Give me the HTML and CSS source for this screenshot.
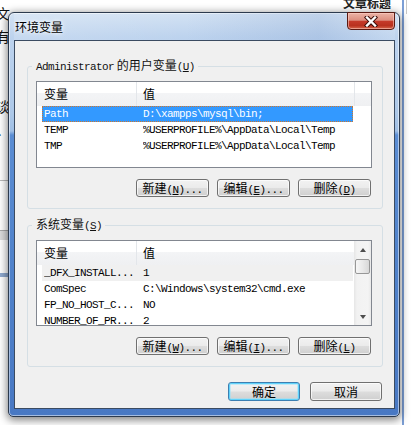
FILE: index.html
```html
<html>
	<head>
		<title>环境变量</title>
		<meta charset="utf-8">
		<link rel="stylesheet" href="styles.css">
	</head>
	<body>
		<div class="desk">
			<!-- bits of the page behind the dialog -->
			<div class="behind">
				<span class="bgchar" style="top:5px">文</span>
				<span class="bgchar" style="top:28px">有</span>
				<span class="bgchar" style="top:98px">谈</span>
				<span class="bgchar" style="top:121px">、</span>
				<div class="bgline grey" style="top:180px"></div>
				<div class="bgline band" style="top:230px"></div>
				<div class="bgline blue" style="top:273px"></div>
				<span class="bgtitle">文章标题</span>
				<div class="vline blue"></div>
				<div class="vline grey"></div>
			</div>

			<div class="window">
				<div class="titlebar">
					<span class="caption">环境变量</span>
					<div class="close-btn">
						<svg width="14" height="11" viewBox="0 0 14 11">
							<path d="M3 1.5 L11 9.5 M11 1.5 L3 9.5" stroke="#3a0e09" stroke-width="4.4" stroke-linecap="square" fill="none"/>
							<path d="M3 1.5 L11 9.5 M11 1.5 L3 9.5" stroke="#ffffff" stroke-width="2.4" stroke-linecap="square" fill="none"/>
						</svg>
					</div>
				</div>
				<div class="client">
					<fieldset class="group">
						<legend><span class="mono">Administrator</span> 的用户变量<span class="mono">(<u>U</u>)</span></legend>
						<div class="list">
							<div class="list-main">
								<div class="list-head">
									<div class="hcol c1">变量</div>
									<div class="hcol c2">值</div>
									<div class="hcol c3"></div>
								</div>
								<div class="row selected"><span class="c1">Path</span><span class="c2">D:\xampps\mysql\bin;</span></div>
								<div class="row"><span class="c1">TEMP</span><span class="c2">%USERPROFILE%\AppData\Local\Temp</span></div>
								<div class="row"><span class="c1">TMP</span><span class="c2">%USERPROFILE%\AppData\Local\Temp</span></div>
							</div>
						</div>
						<div class="btn-row">
							<div class="btn">新建<span class="mono">(<u>N</u>)...</span></div>
							<div class="btn">编辑<span class="mono">(<u>E</u>)...</span></div>
							<div class="btn">删除<span class="mono">(<u>D</u>)</span></div>
						</div>
					</fieldset>

					<fieldset class="group second">
						<legend>系统变量<span class="mono">(<u>S</u>)</span></legend>
						<div class="list short">
							<div class="list-main">
								<div class="list-head">
									<div class="hcol c1">变量</div>
									<div class="hcol c2">值</div>
									<div class="hcol c3"></div>
								</div>
								<div class="row inactive"><span class="c1">_DFX_INSTALL...</span><span class="c2">1</span></div>
								<div class="row"><span class="c1">ComSpec</span><span class="c2">C:\Windows\system32\cmd.exe</span></div>
								<div class="row"><span class="c1">FP_NO_HOST_C...</span><span class="c2">NO</span></div>
								<div class="row"><span class="c1">NUMBER_OF_PR...</span><span class="c2">2</span></div>
							</div>
							<div class="vscroll">
								<div class="sb-arrow up"></div>
								<div class="sb-thumb"></div>
								<div class="sb-track"></div>
								<div class="sb-arrow down"></div>
							</div>
						</div>
						<div class="btn-row">
							<div class="btn">新建<span class="mono">(<u>W</u>)...</span></div>
							<div class="btn">编辑<span class="mono">(<u>I</u>)...</span></div>
							<div class="btn">删除<span class="mono">(<u>L</u>)</span></div>
						</div>
					</fieldset>

					<div class="footer">
						<div class="btn big default">确定</div>
						<div class="btn big">取消</div>
					</div>
				</div>
			</div>
		</div>
	</body>
</html>
```

FILE: styles.css
```css
body{
	margin: 0;
	font-family: "Noto Sans CJK SC", "Liberation Sans", sans-serif;
	font-size: 12px;
	color: #000;
	background: #fff;
}
.desk{
	position: relative;
	width: 412px;
	height: 425px;
	overflow: hidden;
	background: #fff;
}
.mono{
	font-family: "Liberation Mono", "DejaVu Sans Mono", monospace;
	font-size: 11px;
	letter-spacing: -0.6px;
}

/* page behind the dialog */
.bgchar{
	position: absolute;
	left: -4px;
	font-size: 14px;
	line-height: 16px;
	color: #111;
}
.bgline{
	position: absolute;
	left: 0;
	width: 10px;
}
.bgline.grey{
	height: 1px;
	background: #b9b9b9;
}
.bgline.band{
	height: 9px;
	background: #dcdcdc;
	border-top: 1px solid #a8a8a8;
}
.bgline.blue{
	height: 4px;
	background: #8fa9cf;
}
.bgtitle{
	position: absolute;
	left: 343px;
	top: -4px;
	font-size: 12px;
	font-weight: bold;
	line-height: 14px;
	color: #222;
}
.vline{
	position: absolute;
	top: 0;
}
.vline.blue{
	left: 402px;
	width: 2px;
	height: 425px;
	background: #7c9fd6;
}
.vline.grey{
	left: 406px;
	width: 1px;
	height: 14px;
	background: #c8c8c8;
}

/* the dialog window */
.window{
	position: absolute;
	left: 8px;
	top: 12px;
	width: 392px;
	height: 405px;
	box-sizing: border-box;
	border: 1px solid #2c3a4e;
	border-radius: 6px 6px 5px 5px;
	padding: 0 4px 7px 5px;
	display: flex;
	flex-direction: column;
	background: linear-gradient(to bottom, #d3e2f3 0, #bdd3ee 24px, #adc8e8 100px, #a0bfe5 118px, #5b8dd3 122px, #5183cb 240px, #4878c3 100%);
	box-shadow: inset 0 0 0 1px rgba(255,255,255,0.5), 0 2px 9px 1px rgba(0,0,0,0.5);
}
.titlebar{
	height: 27px;
	display: flex;
	align-items: center;
	padding-left: 1px;
	background: linear-gradient(to right, rgba(255,255,255,0.15), rgba(255,255,255,0) 45%, rgba(60,100,170,0.12) 80%, rgba(255,255,255,0.1));
}
.caption{
	line-height: 14px;
	font-size: 12px;
	text-shadow: 0 0 6px #fff, 0 0 3px #fff;
}
.close-btn{
	margin-left: auto;
	align-self: flex-start;
	margin-top: -1px;
	width: 48px;
	height: 18px;
	box-sizing: border-box;
	border: 1px solid #5a1a12;
	border-radius: 0 0 4px 4px;
	background: linear-gradient(to bottom, #ebb3a6 0%, #dc8f80 45%, #c53a2a 52%, #b9311f 78%, #d5654b 100%);
	box-shadow: inset 0 0 0 1px rgba(255,210,200,0.55);
	display: flex;
	align-items: center;
	justify-content: center;
}
.close-btn svg{
	display: block;
}

.client{
	flex: 1;
	background: #f0f0f0;
	border: 1px solid #3b4b61;
	padding: 0 11px 0 12px;
	display: flex;
	flex-direction: column;
}

/* group boxes */
fieldset.group{
	margin: 17px 0 0 0;
	padding: 7px 10px 11px 8px;
	border: 1px solid #d5dfe5;
	border-radius: 3px;
	min-width: 0;
}
fieldset.second{
	margin-top: 8px;
}
legend{
	margin-left: -4px;
	padding: 0 3px 0 4px;
	line-height: 14px;
	font-size: 12px;
	color: #111;
}

/* list views */
div.list{
	height: 87px;
	box-sizing: border-box;
	border: 1px solid #828790;
	background: #fff;
	display: flex;
	overflow: hidden;
}
div.list.short{
	height: 86px;
}
div.list-main{
	flex: 1;
	min-width: 0;
	overflow: hidden;
}
div.list-head{
	display: flex;
	height: 24px;
	background: linear-gradient(to bottom, #ffffff 0%, #ffffff 44%, #f3f4f6 48%, #eff0f2 100%);
}
div.hcol{
	box-sizing: border-box;
	line-height: 24px;
	border-right: 1px solid #e3e6ea;
	flex: none;
	white-space: nowrap;
}
div.hcol.c1{
	width: 100px;
	padding-left: 7px;
}
div.hcol.c2{
	width: 218px;
	padding-left: 6px;
}
div.hcol.c3{
	flex: 1;
	border-right: none;
}
div.row{
	display: flex;
	height: 16px;
	line-height: 16px;
	width: 311px;
	margin-left: 5px;
	padding-left: 2px;
	box-sizing: border-box;
	font-family: "Liberation Mono", "DejaVu Sans Mono", monospace;
	font-size: 11px;
	letter-spacing: -0.6px;
	white-space: nowrap;
}
div.row .c1{
	width: 99px;
	flex: none;
	overflow: hidden;
}
div.row .c2{
	flex: 1;
	overflow: hidden;
}
div.row.selected{
	background: #3399ff;
	color: #fff;
	outline: 1px dotted #d0762a;
	outline-offset: -1px;
}
div.row.inactive{
	background: #f0f0f0;
}

/* scrollbar */
div.vscroll{
	width: 17px;
	flex: none;
	display: flex;
	flex-direction: column;
	background: linear-gradient(to right, #e6e6e6 0, #f2f2f2 3px, #f4f4f4 14px, #e9e9e9 100%);
}
div.sb-arrow{
	height: 17px;
	display: flex;
	align-items: center;
	justify-content: center;
}
div.sb-arrow.up::after, div.sb-arrow.down::after{
	content: "";
	width: 0;
	height: 0;
	border-left: 3.5px solid transparent;
	border-right: 3.5px solid transparent;
}
div.sb-arrow.up::after{
	border-bottom: 4px solid #4d4d4d;
}
div.sb-arrow.down::after{
	border-top: 4px solid #4d4d4d;
}
div.sb-thumb{
	height: 15px;
	margin: 1px 1px 0 1px;
	box-sizing: border-box;
	border: 1px solid #979797;
	border-radius: 2px;
	background: linear-gradient(to right, #f6f6f6, #e9e9e9 50%, #d8d8d8);
}
div.sb-track{
	flex: 1;
}

/* buttons */
div.btn-row{
	display: flex;
	justify-content: flex-end;
	gap: 8px;
	margin-top: 11px;
	padding-right: 1px;
}
div.btn{
	width: 73px;
	height: 18px;
	box-sizing: border-box;
	border: 1px solid #707070;
	border-radius: 3px;
	background: linear-gradient(to bottom, #f2f2f2 0%, #ebebeb 48%, #dddddd 52%, #cfcfcf 100%);
	box-shadow: inset 0 0 0 1px rgba(255,255,255,0.7);
	text-align: center;
	line-height: 16px;
	font-size: 12px;
	white-space: nowrap;
}
div.footer{
	display: flex;
	justify-content: flex-end;
	gap: 10px;
	margin-top: 15px;
	padding-right: 1px;
}
div.btn.big{
	width: 72px;
	height: 19px;
	line-height: 17px;
}
div.btn.default{
	border-color: #3c7fb1;
	box-shadow: inset 0 0 0 1px #5fd2fb, inset 0 0 0 2px rgba(150,225,250,0.5);
}
```
